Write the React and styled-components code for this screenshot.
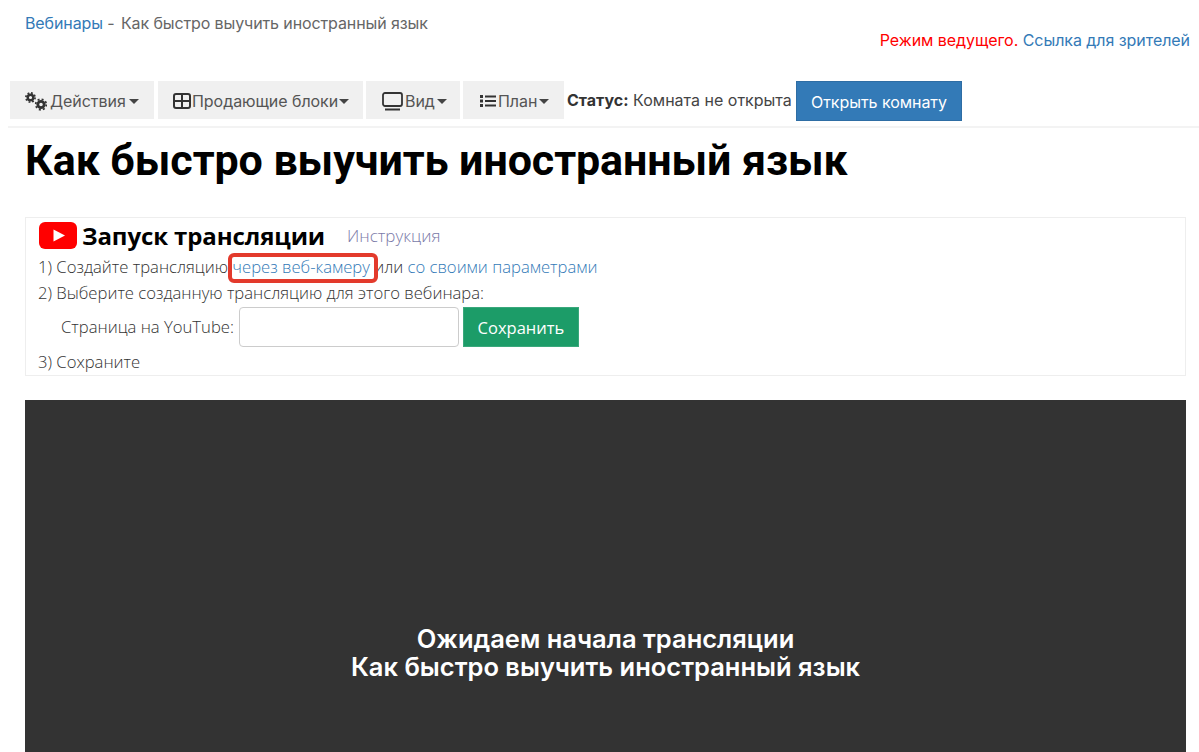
import React from "react";
import styled, { createGlobalStyle } from "styled-components";

const Global = createGlobalStyle`
  html, body { margin: 0; padding: 0; background: #fff; }
  body { font-family: "Inter", "Noto Sans", sans-serif; color: #333; overflow: hidden; height: 752px; }
  * { box-sizing: border-box; }
`;

const Page = styled.div`
  width: 1199px;
  height: 752px;
  overflow: hidden;
  padding-left: 8px;
`;

const TopBar = styled.div`
  display: flex;
  justify-content: space-between;
  align-items: flex-start;
  height: 81px;
  padding: 13px 9px 0 17px;
  font-size: 16px;
`;

const Crumbs = styled.div`
  line-height: 20px;
  color: #666;
  letter-spacing: -0.11px;
`;

const CrumbCurrent = styled.span`
  margin-left: 2px;
`;

const BlueLink = styled.a`
  color: #337ab7;
`;

const Mode = styled.div`
  margin-top: 17px;
  line-height: 20px;
  letter-spacing: -0.05px;
`;

const Red = styled.span`
  color: #f00;
`;

const Toolbar = styled.div`
  display: flex;
  align-items: stretch;
  height: 47px;
  padding: 0 0 7px 2px;
  border-bottom: 2px solid #f3f3f3;
`;

const Menu = styled.div`
  display: flex;
  align-items: center;
  background: #f0f0f0;
  color: #555;
  font-size: 16px;
  letter-spacing: -0.05px;
  width: ${(p) => p.$w}px;
  margin-right: ${(p) => p.$gap}px;
  padding: 2px 0 0 ${(p) => p.$pad}px;
  gap: ${(p) => p.$inner || 1}px;
`;

const Caret = styled.span`
  width: 0;
  height: 0;
  border-left: 5px solid transparent;
  border-right: 5px solid transparent;
  border-top: 5px solid #444;
`;

const Status = styled.div`
  font-size: 16px;
  line-height: 38px;
  color: #444;
  margin-left: 3px;
  width: 229px;
  white-space: nowrap;
  b { font-weight: 700; color: #333; }
`;

const OpenButton = styled.button`
  width: 166px;
  height: 40px;
  background: #337ab7;
  border: 1px solid #2e6da4;
  color: #fff;
  font: 16px "Inter", sans-serif;
  letter-spacing: -0.05px;
  padding: 2px 0 0;
`;

const Title = styled.h1`
  margin: 0;
  padding: 9px 0 0 17px;
  height: 89px;
  font: 700 43px/46px "Roboto", sans-serif;
  letter-spacing: -0.08px;
  color: #000;
`;

const Card = styled.div`
  position: relative;
  margin: 0 13px 0 17px;
  height: 159px;
  border: 1px solid #eee;
  padding: 1px 0 0 12px;
  font: 300 16.65px/24px "Open Sans", sans-serif;
  color: #333;
`;

const CardHead = styled.div`
  display: flex;
  align-items: center;
  height: 33px;
  margin-bottom: 3px;
`;

const LogoSlot = styled.span`
  display: flex;
  margin-left: 1px;
`;

const CardTitle = styled.span`
  font: 700 24px/30px "Open Sans", sans-serif;
  color: #000;
  margin-left: 5px;
  letter-spacing: -0.1px;
`;

const Hint = styled.a`
  color: #7a7aa8;
  margin-left: 22px;
  font-size: 17px;
`;

const Step = styled.div`
  height: 26px;
  white-space: nowrap;
`;

const CardLink = styled.a`
  color: #337ab7;
`;

const Highlight = styled.span`
  position: absolute;
  left: 202px;
  top: 35px;
  width: 150px;
  height: 30px;
  border: 4px solid #e33a2c;
  border-radius: 6px;
  background: transparent;
`;

const FormRow = styled.div`
  display: flex;
  align-items: center;
  height: 40px;
  margin: 0 0 0 23px;
`;

const UrlInput = styled.input`
  width: 220px;
  height: 40px;
  margin-left: 5px;
  border: 1px solid #ccc;
  border-radius: 4px;
  background: #fff;
`;

const SaveButton = styled.button`
  width: 116px;
  height: 40px;
  margin-left: 4px;
  background: #1c9c68;
  border: 1px solid #3aa87c;
  color: #fff;
  font: 400 16.5px "Open Sans", sans-serif;
  padding: 0;
`;

const LastStep = styled(Step)`
  margin-top: 3px;
`;

const Player = styled.div`
  margin: 24px 13px 0 17px;
  height: 360px;
  background: #333;
  color: #fff;
  text-align: center;
  font: 600 25.5px/28px "Inter", sans-serif;
  padding-top: 225px;
`;

const Gears = () => (
  <svg width="22" height="19" viewBox="0 0 22 19" fill="none" stroke="#333">
    <circle cx="5.500" cy="5.500" r="2.800" strokeWidth="2.400" />
    <circle cx="5.500" cy="5.500" r="4.600" strokeWidth="1.700" strokeDasharray="1.800 1.810" />
    <circle cx="16" cy="12.500" r="3.200" strokeWidth="2.800" />
    <circle cx="16" cy="12.500" r="5.300" strokeWidth="1.700" strokeDasharray="2 2.160" />
  </svg>
);

const GridIcon = () => (
  <svg width="18" height="16" viewBox="0 0 18 16" fill="none" stroke="#333" strokeWidth="2">
    <rect x="1" y="1" width="16" height="14" rx="2" />
    <path d="M9 1v14M1 8h16" />
  </svg>
);

const Monitor = () => (
  <svg width="21" height="19" viewBox="0 0 21 19" fill="none" stroke="#333">
    <rect x="1" y="1" width="19" height="13" rx="2" strokeWidth="1.800" />
    <path d="M3 17.500h15" strokeWidth="2" />
  </svg>
);

const ListIcon = () => (
  <svg width="16" height="14" viewBox="0 0 16 14" fill="#333">
    <rect x="0" y="1" width="3" height="3" />
    <rect x="0" y="5.500" width="3" height="3" />
    <rect x="0" y="10" width="3" height="3" />
    <rect x="5" y="1.500" width="11" height="2" />
    <rect x="5" y="6" width="11" height="2" />
    <rect x="5" y="10.500" width="11" height="2" />
  </svg>
);

const YouTube = () => (
  <svg width="38" height="27" viewBox="0 0 38 27">
    <rect x="0" y="0" width="38" height="27" rx="6" fill="#f00" />
    <path d="M14.500 7.500L26 13.500l-11.500 6z" fill="#fff" />
  </svg>
);

export default function App() {
  return (
    <Page>
      <Global />
      <TopBar>
        <Crumbs>
          <BlueLink>Вебинары</BlueLink> - <CrumbCurrent>Как быстро выучить иностранный язык</CrumbCurrent>
        </Crumbs>
        <Mode>
          <Red>Режим ведущего.</Red> <BlueLink>Ссылка для зрителей</BlueLink>
        </Mode>
      </TopBar>
      <Toolbar>
        <Menu $w={144} $gap={4} $pad={15} $inner={3}><Gears />Действия<Caret /></Menu>
        <Menu $w={205} $gap={3} $pad={15}><GridIcon />Продающие блоки<Caret /></Menu>
        <Menu $w={94} $gap={3} $pad={16} $inner={2}><Monitor />Вид<Caret /></Menu>
        <Menu $w={101} $gap={0} $pad={17} $inner={2}><ListIcon />План<Caret /></Menu>
        <Status><b>Статус:</b> Комната не открыта</Status>
        <OpenButton>Открыть комнату</OpenButton>
      </Toolbar>
      <Title>Как быстро выучить иностранный язык</Title>
      <Card>
        <CardHead>
          <LogoSlot><YouTube /></LogoSlot>
          <CardTitle>Запуск трансляции</CardTitle>
          <Hint>Инструкция</Hint>
        </CardHead>
        <Step>1) Создайте трансляцию <CardLink>через веб-камеру</CardLink> или <CardLink>со своими параметрами</CardLink></Step>
        <Highlight />
        <Step>2) Выберите созданную трансляцию для этого вебинара:</Step>
        <FormRow>
          Страница на YouTube:
          <UrlInput />
          <SaveButton>Сохранить</SaveButton>
        </FormRow>
        <LastStep>3) Сохраните</LastStep>
      </Card>
      <Player>
        Ожидаем начала трансляции
        <br />
        Как быстро выучить иностранный язык
      </Player>
    </Page>
  );
}
